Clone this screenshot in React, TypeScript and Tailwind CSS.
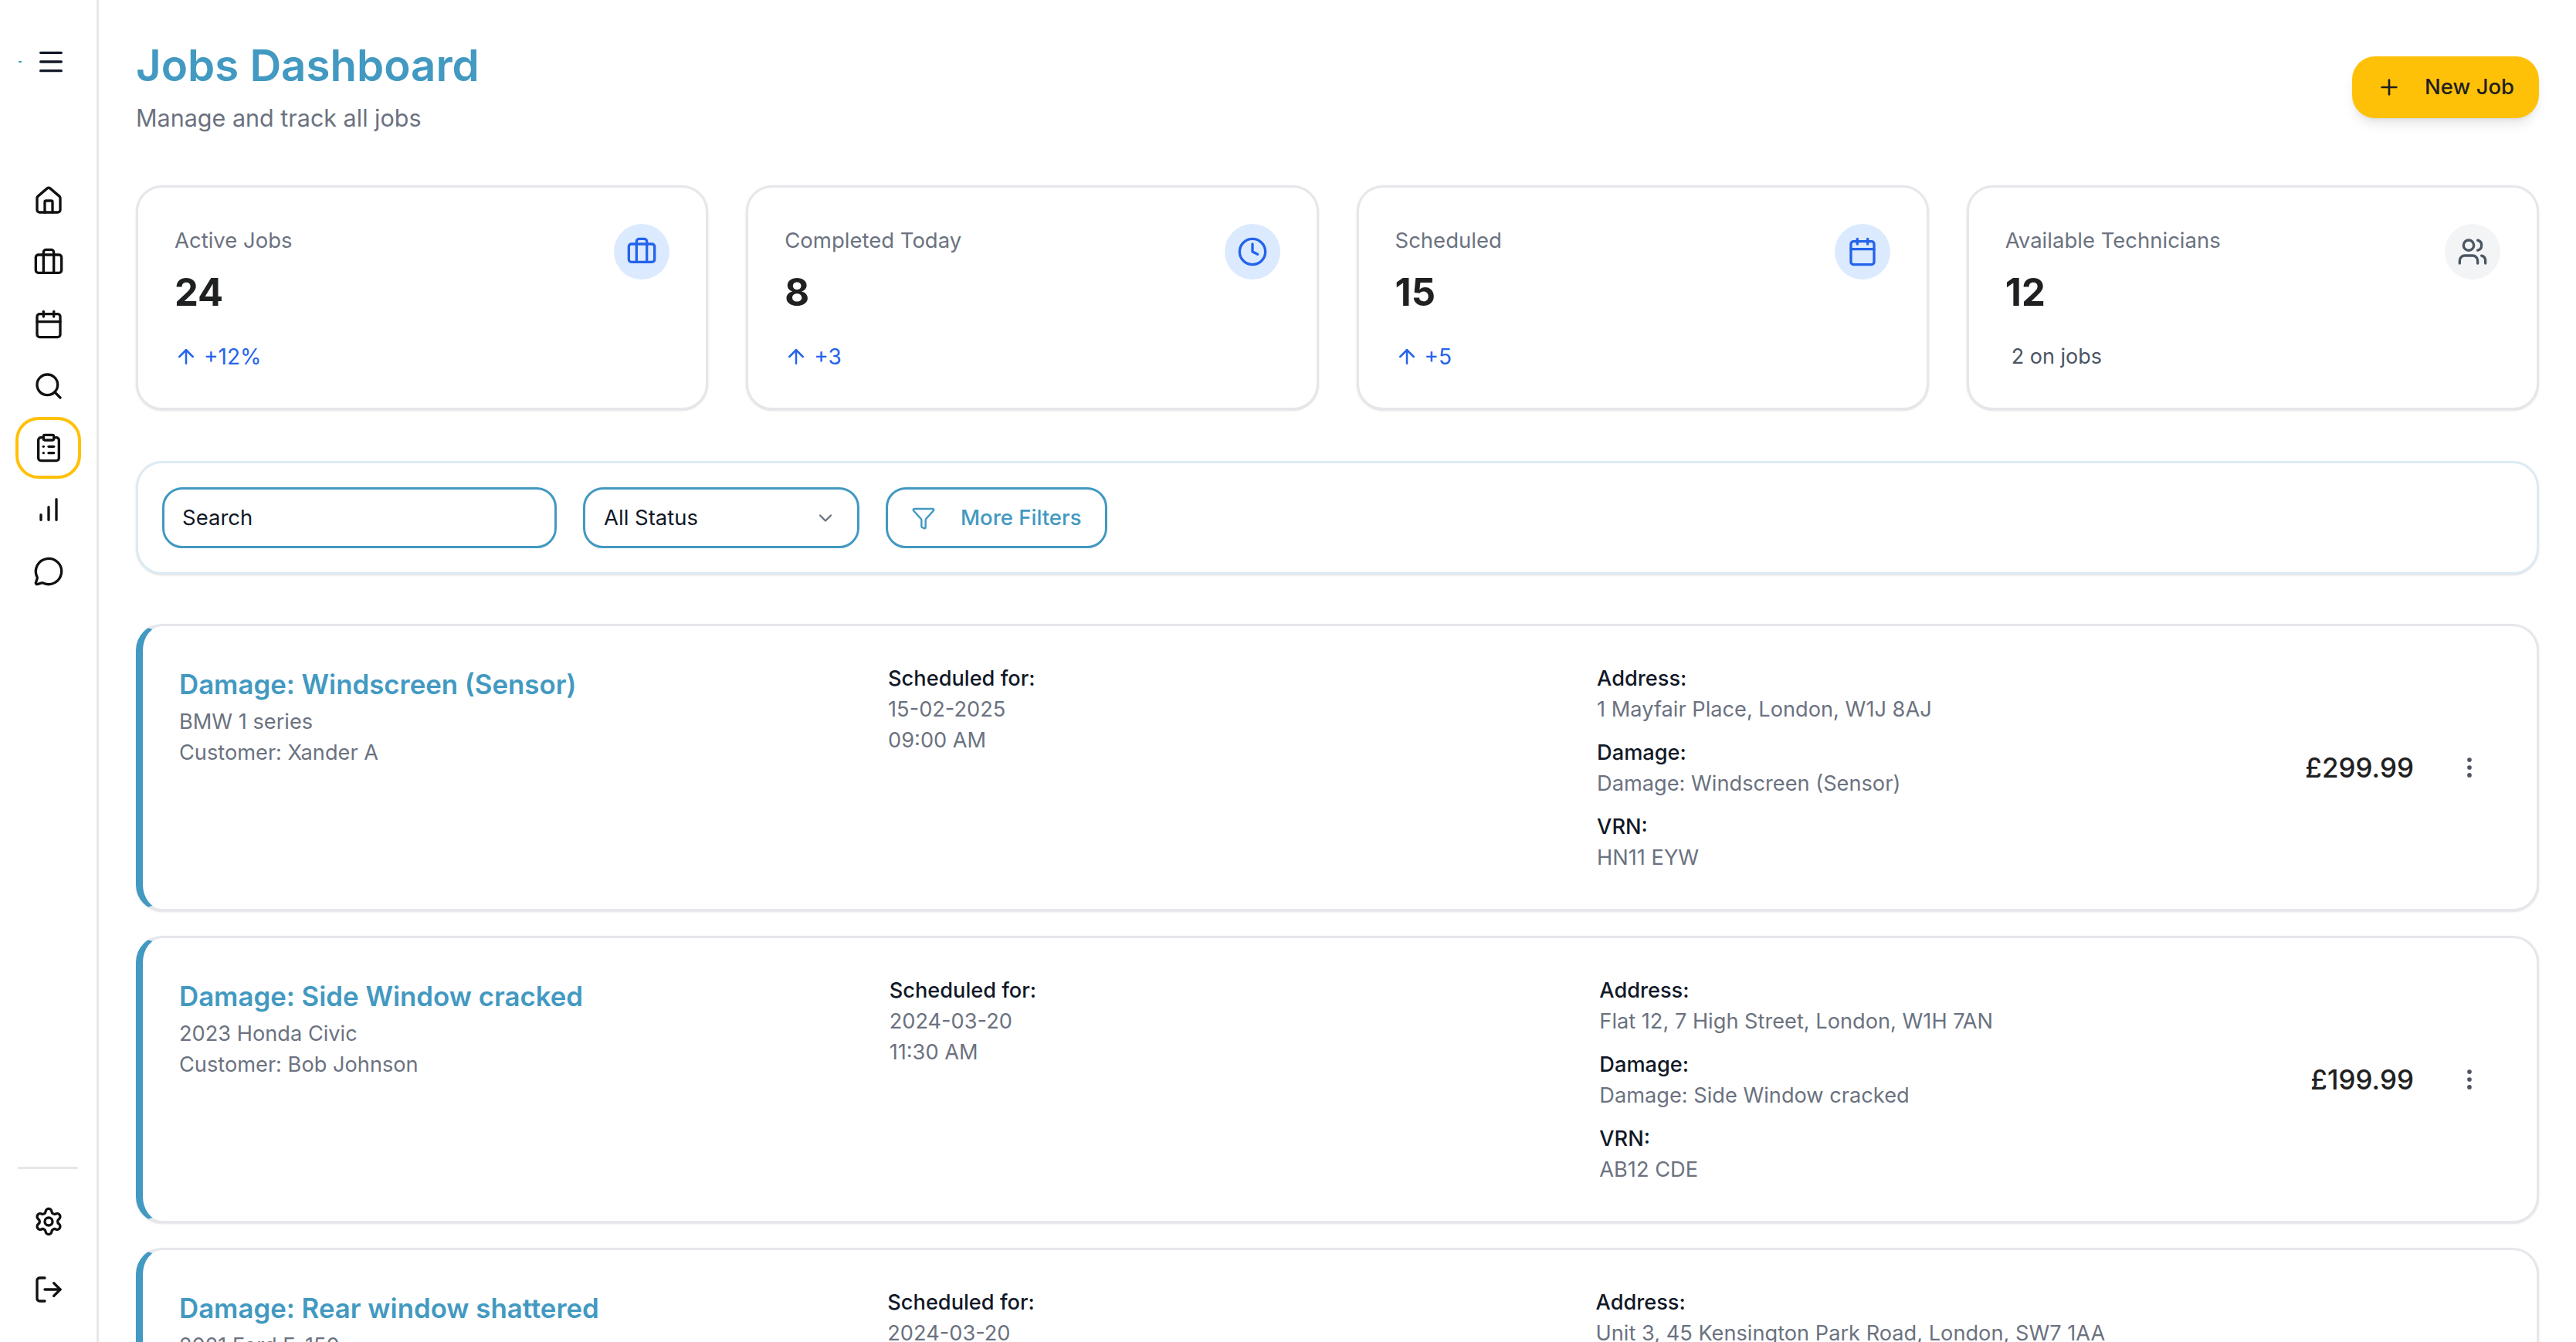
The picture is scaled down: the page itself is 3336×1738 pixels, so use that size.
import React from 'react';
import {
  ArrowUp,
  Briefcase,
  Calendar,
  ChevronDown,
  ClipboardList,
  Clock,
  Filter,
  House,
  LogOut,
  Menu,
  MessageCircle,
  MoreVertical,
  Plus,
  Search,
  Settings,
  Users,
} from 'lucide-react';

const BarsIcon = ({ className }: { className?: string }) => (
  <svg viewBox="0 0 24 24" fill="none" stroke="currentColor" strokeWidth="2" strokeLinecap="round" className={className}>
    <path d="M12 20V10" />
    <path d="M18 20V4" />
    <path d="M6 20v-4" />
  </svg>
);

const navItems = [
  { icon: House },
  { icon: Briefcase },
  { icon: Calendar },
  { icon: Search },
  { icon: ClipboardList, active: true },
  { icon: BarsIcon },
  { icon: MessageCircle },
];

const stats = [
  { label: 'Active Jobs', value: '24', change: '+12%', icon: Briefcase },
  { label: 'Completed Today', value: '8', change: '+3', icon: Clock },
  { label: 'Scheduled', value: '15', change: '+5', icon: Calendar },
  { label: 'Available Technicians', value: '12', note: '2 on jobs', icon: Users },
];

interface Job {
  title: string;
  vehicle: string;
  customer?: string;
  date: string;
  time?: string;
  address: string;
  vrn?: string;
  price: string;
}

const jobs: Job[] = [
  {
    title: 'Damage: Windscreen (Sensor)',
    vehicle: 'BMW 1 series',
    customer: 'Customer: Xander A',
    date: '15-02-2025',
    time: '09:00 AM',
    address: '1 Mayfair Place, London, W1J 8AJ',
    vrn: 'HN11 EYW',
    price: '£299.99',
  },
  {
    title: 'Damage: Side Window cracked',
    vehicle: '2023 Honda Civic',
    customer: 'Customer: Bob Johnson',
    date: '2024-03-20',
    time: '11:30 AM',
    address: 'Flat 12, 7 High Street, London, W1H 7AN',
    vrn: 'AB12 CDE',
    price: '£199.99',
  },
  {
    title: 'Damage: Rear window shattered',
    vehicle: '2021 Ford F-150',
    date: '2024-03-20',
    address: 'Unit 3, 45 Kensington Park Road, London, SW7 1AA',
    price: '£449.99',
  },
];

const Sidebar = () => (
  <aside className="flex h-full w-[128px] shrink-0 flex-col items-center border-r-[3px] border-[#e5e7eb] pb-[48px]">
    <div className="flex h-[160px] w-full items-center pl-[24px]">
      <span className="h-[2px] w-[4px] bg-[#4299c1]" />
      <Menu className="ml-[18px] h-[40px] w-[40px] text-[#111827]" strokeWidth={2} />
    </div>
    <nav className="mt-[60px] flex flex-col items-center">
      {navItems.map(({ icon: Icon, active }, i) => (
        <div
          key={i}
          className={`flex h-[80px] w-[85px] items-center justify-center rounded-[30px] border-[4px] ${
            active ? 'border-[#ffc107]' : 'border-transparent'
          }`}
        >
          <Icon className="h-[40px] w-[40px] text-[#111111]" />
        </div>
      ))}
    </nav>
    <div className="mt-auto h-[3px] w-[78px] -translate-x-[1px] bg-[#e5e7eb]" />
    <div className="mt-[48px] flex h-[40px] items-center">
      <Settings className="h-[40px] w-[40px] text-[#111111]" />
    </div>
    <div className="mt-[48px] flex h-[40px] items-center">
      <LogOut className="h-[40px] w-[40px] text-[#111111]" />
    </div>
  </aside>
);

const StatCard = ({ stat }: { stat: (typeof stats)[number] }) => {
  const Icon = stat.icon;
  const muted = !stat.change;
  return (
    <div className="flex min-w-0 flex-1 items-start justify-between rounded-[34px] border-[3px] border-[#e5e7eb] bg-white px-[47px] pt-[47px] pb-[47px] shadow-sm">
      <div>
        <p className="text-[27.5px] leading-[42px] text-[#6b7280]">{stat.label}</p>
        <p className="mt-[17px] text-[49px] leading-[60px] font-bold text-[#1f2021]">{stat.value}</p>
        {stat.change ? (
          <div className="mt-[34px] flex h-[38px] items-center text-[28px] text-[#2563eb]">
            <ArrowUp className="h-[30px] w-[30px]" />
            <span className="ml-[8px]">{stat.change}</span>
          </div>
        ) : (
          <div className="mt-[34px] h-[38px] pl-[8px] text-[27px] leading-[38px] text-[#4b5563]">{stat.note}</div>
        )}
      </div>
      <div
        className={`flex h-[72px] w-[72px] items-center justify-center rounded-full ${
          muted ? 'bg-[#f3f4f6]' : 'bg-[#dbeafe]'
        }`}
      >
        <Icon className={`h-[40px] w-[40px] ${muted ? 'text-[#4b5563]' : 'text-[#2563eb]'}`} strokeWidth={2} />
      </div>
    </div>
  );
};

const FilterBar = () => (
  <div className="mt-[66px] flex gap-[34px] rounded-[34px] border-[3px] border-[#dcebf3] bg-white p-[31px] shadow-sm">
    <div className="flex h-[79px] w-[511px] items-center rounded-[26px] border-[3px] border-[#4299c1] pl-[23px] text-[27.5px] text-[#111827]">
      Search
    </div>
    <div className="flex h-[79px] w-[358px] items-center justify-between rounded-[26px] border-[3px] border-[#4299c1] pr-[27px] pl-[24px] text-[27.5px] text-[#111827]">
      All Status
      <ChevronDown className="h-[28px] w-[28px] text-[#6b7280]" />
    </div>
    <div className="flex h-[79px] w-[287px] items-center rounded-[26px] border-[3px] border-[#4299c1] pl-[30px] text-[27.5px] font-medium text-[#4299c1]">
      <Filter className="h-[32px] w-[32px]" strokeWidth={1.8} />
      <span className="ml-[32px]">More Filters</span>
    </div>
  </div>
);

const Field = ({ label, value }: { label: string; value?: string }) => (
  <div>
    <p className="font-medium text-[#111827]">{label}</p>
    <p className="text-[#6b7280]">{value}</p>
  </div>
);

const JobCard = ({ job }: { job: Job }) => (
  <div className="flex items-center rounded-[34px] border-[3px] border-l-[9px] border-[#e5e7eb] border-l-[#4299c1] bg-white pt-[48px] pb-[46px] pl-[47px] shadow-sm">
    <div className="grid flex-1 grid-cols-3 gap-[34px] text-[27.2px] leading-[40px]">
      <div>
        <h3 className="-mt-[1px] text-[34.8px] leading-[56px] font-semibold text-[#4299c1]">{job.title}</h3>
        <p className="mt-[1px] text-[#6b7280]">{job.vehicle}</p>
        {job.customer && <p className="text-[#6b7280]">{job.customer}</p>}
      </div>
      <div>
        <p className="font-medium text-[#111827]">Scheduled for:</p>
        <p className="text-[#6b7280]">{job.date}</p>
        {job.time && <p className="text-[#6b7280]">{job.time}</p>}
      </div>
      <div className="flex flex-col gap-[16px]">
        <Field label="Address:" value={job.address} />
        <Field label="Damage:" value={job.title} />
        {job.vrn && <Field label="VRN:" value={job.vrn} />}
      </div>
    </div>
    <p className="ml-[33px] min-w-[136px] -translate-y-[1px] text-right text-[35px] font-medium text-[#1f2021]">{job.price}</p>
    <div className="mr-[53px] ml-[38px] flex h-[68px] w-[68px] -translate-y-[1px] items-center justify-center text-[#4b5563]">
      <MoreVertical className="h-[34px] w-[34px]" />
    </div>
  </div>
);

export default function App() {
  return (
    <div className="flex h-screen overflow-hidden bg-white [font-family:Inter,sans-serif]">
      <Sidebar />
      <main className="min-w-0 flex-1 overflow-hidden pt-[49px] pr-[48px] pl-[48px]">
        <header className="flex items-center justify-between">
          <div>
            <h1 className="text-[56.4px] leading-[72px] font-semibold text-[#4299c1]">Jobs Dashboard</h1>
            <p className="mt-[8px] text-[30.5px] leading-[48px] text-[#6b7280]">Manage and track all jobs</p>
          </div>
          <button className="flex h-[80px] w-[242px] items-center rounded-[30px] bg-[#ffc107] pl-[32px] text-[27.5px] font-medium text-[#1f2021] shadow-lg">
            <Plus className="h-[32px] w-[32px]" strokeWidth={2} />
            <span className="ml-[30px]">New Job</span>
          </button>
        </header>

        <section className="mt-[63px] flex gap-[49px]">
          {stats.map((stat) => (
            <StatCard key={stat.label} stat={stat} />
          ))}
        </section>

        <FilterBar />

        <section className="mt-[64px] flex flex-col gap-[32px]">
          {jobs.map((job) => (
            <JobCard key={job.title} job={job} />
          ))}
        </section>
      </main>
    </div>
  );
}
